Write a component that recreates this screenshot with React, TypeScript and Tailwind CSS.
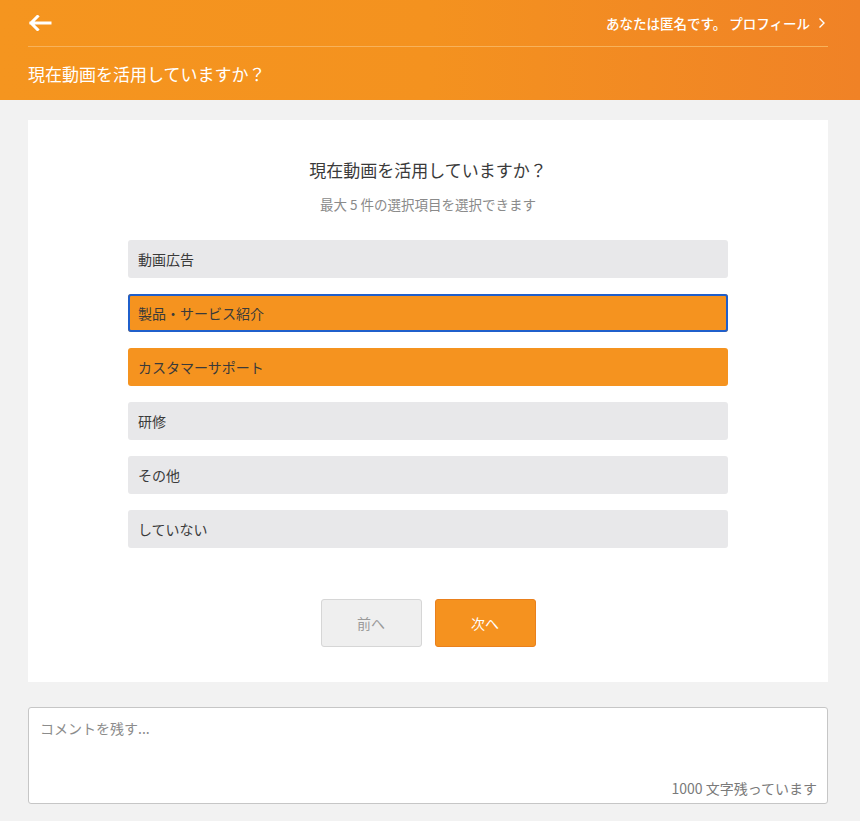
import { useState } from "react";

const options = [
  "動画広告",
  "製品・サービス紹介",
  "カスタマーサポート",
  "研修",
  "その他",
  "していない",
];

export default function App() {
  const [selected, setSelected] = useState<number[]>([1, 2]);
  const [focused, setFocused] = useState<number | null>(1);
  const [comment, setComment] = useState("");

  const toggle = (i: number) => {
    setFocused(i);
    setSelected((prev) =>
      prev.includes(i) ? prev.filter((x) => x !== i) : prev.length < 5 ? [...prev, i] : prev
    );
  };

  return (
    <div
      className="min-h-[821px] bg-[#f2f2f2] text-[#333]"
      style={{ fontFamily: '"Noto Sans CJK JP", "Noto Sans", sans-serif' }}
    >
      {/* Header */}
      <header className="h-[100px] bg-gradient-to-r from-[#f5951f] via-[#f4921f] to-[#f08226]">
        <div className="ml-7 w-[800px]">
          <div className="flex h-[47px] items-center justify-between border-b border-[#f8b25a]">
            <button className="text-white">
              <svg width="24" height="16" viewBox="0 0 24 16" fill="none">
                <path d="M22 8H3M9.5 1.5L3 8l6.5 6.5" stroke="white" strokeWidth="3" strokeLinecap="square" />
              </svg>
            </button>
            <a className="flex items-center gap-2 pr-[2px] text-[13.5px] font-medium text-white">
              あなたは匿名です。 プロフィール
              <svg width="8" height="12" viewBox="0 0 8 12" fill="none">
                <path d="M1.5 1.5L6 6l-4.5 4.5" stroke="white" strokeWidth="1.4" />
              </svg>
            </a>
          </div>
          <h1 className="flex h-[53px] items-center text-[17px] font-normal text-white">
            現在動画を活用していますか？
          </h1>
        </div>
      </header>

      <main className="ml-7 w-[800px] pt-5">
        {/* Question card */}
        <section className="flex flex-col items-center bg-white pt-[37px] pb-[35px]">
          <h2 className="text-[17px] leading-[26px] text-[#3a3a3a]">現在動画を活用していますか？</h2>
          <p className="mt-[12px] text-[13.5px] leading-[19px] text-[#8a8a8a]">最大 5 件の選択項目を選択できます</p>

          <ul className="mt-[26px] flex w-[600px] flex-col gap-4">
            {options.map((o, i) => {
              const on = selected.includes(i);
              return (
                <li key={o}>
                  <button
                    onClick={() => toggle(i)}
                    className={
                      "flex h-[38px] w-full items-center rounded-[3px] px-[10px] text-left text-[14px] text-[#3a3a3a] " +
                      (on ? "bg-[#f5931f] " : "bg-[#e8e8ea] ") +
                      (focused === i ? "outline-2 outline-[#1f5fcb] -outline-offset-2" : "")
                    }
                  >
                    {o}
                  </button>
                </li>
              );
            })}
          </ul>

          <div className="mt-[51px] flex gap-[13px]">
            <button
              disabled
              className="h-[48px] w-[101px] rounded-[3px] border border-[#d6d6d6] bg-[#efefef] text-[14px] text-[#9a9a9a]"
            >
              前へ
            </button>
            <button className="h-[48px] w-[101px] rounded-[3px] border border-[#e9801d] bg-[#f5921f] text-[14px] text-white">
              次へ
            </button>
          </div>
        </section>

        {/* Comment */}
        <div className="relative mt-[25px] h-[97px] rounded-[3px] border border-[#c6c6c6] bg-white">
          <textarea
            value={comment}
            onChange={(e) => setComment(e.target.value.slice(0, 1000))}
            placeholder="コメントを残す..."
            className="h-full w-full resize-none bg-transparent px-[11px] pt-[10px] text-[14px] text-[#333] outline-none placeholder:text-[#8c8c8c]"
          />
          <span className="absolute right-[10px] bottom-[4px] text-[14px] text-[#7a7a7a]">
            {1000 - comment.length} 文字残っています
          </span>
        </div>
      </main>
    </div>
  );
}
